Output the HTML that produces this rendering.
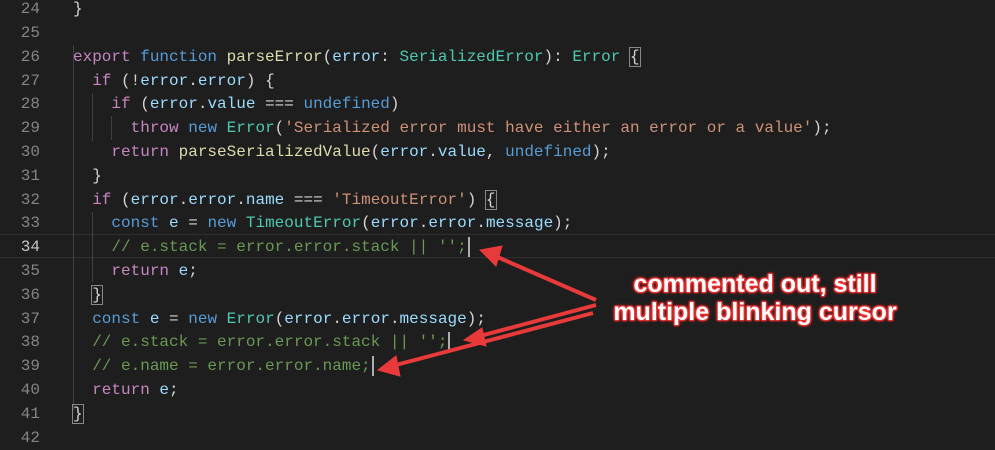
<!DOCTYPE html><html><head><style>
body{margin:0;width:995px;height:446px;background:#1e1e1e;overflow:hidden;position:relative;font-family:"Liberation Mono",monospace;font-size:16px}
.l{position:absolute;left:0;height:24px;line-height:24px;white-space:pre;width:995px}
.n{position:absolute;right:955px;color:#858585;text-align:right}
.c{position:absolute;left:73px;color:#d4d4d4}
.k{color:#c586c0}.b{color:#569cd6}.f{color:#dcdcaa}.v{color:#9cdcfe}.t{color:#4ec9b0}.s{color:#ce9178}.m{color:#6a9955}
.cur{display:inline-block;width:2px;height:20px;background:#aeafad;vertical-align:middle;margin-left:1px}
.g{position:absolute;width:1px;background:#404040}
.bx{outline:1px solid #888}
.ann{position:absolute;left:600px;width:310px;text-align:center;font-family:"Liberation Sans",sans-serif;font-weight:bold;font-size:25px;line-height:28px;color:#fff;text-shadow:0 0 2px #e33,0 0 2px #e33,1px 1px 1px #e33,-1px -1px 1px #e33,1px -1px 1px #e33,-1px 1px 1px #e33,0 0 4px #e33}
</style></head><body>
<div class="l" style="top:234px;border-top:1px solid #303030;border-bottom:1px solid #303030;height:22px"></div>
<div class="g" style="left:73px;top:45px;height:365px"></div>
<div class="g" style="left:92px;top:93px;height:48px"></div>
<div class="g" style="left:92px;top:212px;height:70px"></div>
<div class="g" style="left:111px;top:116px;height:24px"></div>
<div class="l" style="top:-3px"><span class="n">24</span><span class="c">}</span></div>
<div class="l" style="top:21px"><span class="n">25</span></div>
<div class="l" style="top:45px"><span class="n">26</span><span class="c"><span class="k">export</span> <span class="b">function</span> <span class="f">parseError</span>(<span class="v">error</span>: <span class="t">SerializedError</span>): <span class="t">Error</span> <span class="bx">{</span></span></div>
<div class="l" style="top:69px"><span class="n">27</span><span class="c">  <span class="k">if</span> (!<span class="v">error</span>.<span class="v">error</span>) {</span></div>
<div class="l" style="top:92px"><span class="n">28</span><span class="c">    <span class="k">if</span> (<span class="v">error</span>.<span class="v">value</span> === <span class="b">undefined</span>)</span></div>
<div class="l" style="top:116px"><span class="n">29</span><span class="c">      <span class="k">throw</span> <span class="b">new</span> <span class="t">Error</span>(<span class="s">'Serialized error must have either an error or a value'</span>);</span></div>
<div class="l" style="top:140px"><span class="n">30</span><span class="c">    <span class="k">return</span> <span class="f">parseSerializedValue</span>(<span class="v">error</span>.<span class="v">value</span>, <span class="b">undefined</span>);</span></div>
<div class="l" style="top:164px"><span class="n">31</span><span class="c">  }</span></div>
<div class="l" style="top:188px"><span class="n">32</span><span class="c">  <span class="k">if</span> (<span class="v">error</span>.<span class="v">error</span>.<span class="v">name</span> === <span class="s">'TimeoutError'</span>) <span class="bx">{</span></span></div>
<div class="l" style="top:211px"><span class="n">33</span><span class="c">    <span class="b">const</span> <span class="v">e</span> = <span class="b">new</span> <span class="t">TimeoutError</span>(<span class="v">error</span>.<span class="v">error</span>.<span class="v">message</span>);</span></div>
<div class="l" style="top:235px"><span class="n" style="color:#c6c6c6">34</span><span class="c">    <span class="m">// e.stack = error.error.stack || '';</span><span class="cur"></span></span></div>
<div class="l" style="top:259px"><span class="n">35</span><span class="c">    <span class="k">return</span> <span class="v">e</span>;</span></div>
<div class="l" style="top:283px"><span class="n">36</span><span class="c">  <span class="bx">}</span></span></div>
<div class="l" style="top:307px"><span class="n">37</span><span class="c">  <span class="b">const</span> <span class="v">e</span> = <span class="b">new</span> <span class="t">Error</span>(<span class="v">error</span>.<span class="v">error</span>.<span class="v">message</span>);</span></div>
<div class="l" style="top:330px"><span class="n">38</span><span class="c">  <span class="m">// e.stack = error.error.stack || '';</span><span class="cur"></span></span></div>
<div class="l" style="top:354px"><span class="n">39</span><span class="c">  <span class="m">// e.name = error.error.name;</span><span class="cur"></span></span></div>
<div class="l" style="top:378px"><span class="n">40</span><span class="c">  <span class="k">return</span> <span class="v">e</span>;</span></div>
<div class="l" style="top:402px"><span class="n">41</span><span class="c"><span class="bx">}</span></span></div>
<div class="l" style="top:426px"><span class="n">42</span></div>
<svg style="position:absolute;left:0;top:0" width="995" height="446">
<g stroke="#e83a3a" stroke-width="4" fill="#e83a3a">
<line x1="596" y1="300" x2="495" y2="256"/><polygon points="480,250 502,246 496,266" stroke-width="1"/>
<line x1="596" y1="305" x2="480" y2="336"/><polygon points="464,340 482,328 486,346" stroke-width="1"/>
<line x1="593" y1="313" x2="392" y2="366"/><polygon points="378,370 396,356 400,376" stroke-width="1"/>
</g></svg>
<div class="ann" style="top:270px">commented out, still<br>multiple blinking cursor</div>
</body></html>
